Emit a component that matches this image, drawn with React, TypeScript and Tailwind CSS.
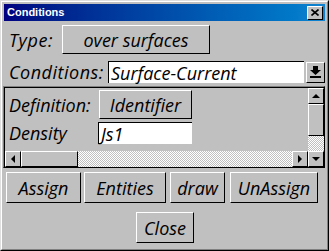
import React from "react";

const raised =
  "border border-t-white border-l-white border-r-black border-b-black bg-[#c0c0c0]";
const font = "font-['Open_Sans',sans-serif] italic text-[18px] text-black leading-none";

function Btn({ w, h, children, cls = "" }: { w: string; h: string; children: React.ReactNode; cls?: string }) {
  return (
    <div className={`${raised} ${w} ${h} ${font} flex items-center justify-center shrink-0 ${cls}`}>
      {children}
    </div>
  );
}

function Arrow({ dir }: { dir: "up" | "down" | "left" | "right" }) {
  const pts =
    dir === "up"
      ? "1,5 5,1 9,5"
      : dir === "down"
      ? "1,1 5,5 9,1"
      : dir === "left"
      ? "5,1 1,5 5,9"
      : "1,1 5,5 1,9";
  const vert = dir === "up" || dir === "down";
  return (
    <div className={`${raised} w-[16px] h-[16px] flex items-center justify-center shrink-0`}>
      <svg width={vert ? 10 : 6} height={vert ? 6 : 10} viewBox={vert ? "0 0 10 6" : "0 0 6 10"}>
        <polygon points={pts} fill="#000" />
      </svg>
    </div>
  );
}

const checker =
  "bg-[repeating-conic-gradient(#c0c0c0_0%_25%,#ffffff_0%_50%)] bg-[length:2px_2px]";

export default function App() {
  return (
    <div className="w-[329px] h-[251px] bg-[#c0c0c0] border border-t-[#dfdfdf] border-l-[#dfdfdf] border-r-black border-b-black">
      <div className="w-full h-full border border-t-white border-l-white border-r-[#808080] border-b-[#808080] p-[2px] flex flex-col">
        {/* title bar */}
        <div className="h-[17px] flex items-center justify-between bg-gradient-to-r from-[#000080] to-[#1084d0] pl-[3px] pr-[2px] shrink-0">
          <span className="font-['Liberation_Sans',sans-serif] font-bold text-[11px] text-white leading-none">
            Conditions
          </span>
          <div className={`${raised} w-[16px] h-[14px] flex items-center justify-center`}>
            <svg width="8" height="7" viewBox="0 0 8 7">
              <path d="M0.5 0.5 L7.5 6.5 M7.5 0.5 L0.5 6.5" stroke="#000" strokeWidth="1.6" />
            </svg>
          </div>
        </div>

        {/* Type row */}
        <div className="mt-[4px] h-[29px] flex items-center shrink-0">
          <span className={`${font} w-[58px] pl-[5px] tracking-[0.6px]`}>Type:</span>
          <Btn w="w-[148px]" h="h-[29px]">over surfaces</Btn>
        </div>

        {/* Conditions row */}
        <div className="mt-[7px] h-[22px] flex items-center shrink-0">
          <span className={`${font} w-[104px] pl-[5px] tracking-[0.5px]`}>Conditions:</span>
          <div className={`w-[196px] h-[22px] bg-white border-t border-l border-t-black border-l-black ${font} flex items-center pl-[2px]`}>
            Surface-Current
          </div>
          <div className={`${raised} ml-[2px] w-[19px] h-[21px] flex items-center justify-center`}>
            <svg width="11" height="12" viewBox="0 0 11 12">
              <polygon points="3,0 8,0 8,4 11,4 5.5,9 0,4 3,4" fill="#000" />
              <rect x="0" y="10" width="11" height="2" fill="#000" />
            </svg>
          </div>
        </div>

        {/* Panel */}
        <div className="mt-[3px] -ml-px w-[322px] h-[82px] border border-t-[#808080] border-l-[#808080] border-b-black border-r-black shadow-[inset_1px_1px_0_#000] pl-px pt-px flex shrink-0">
          <div className="flex flex-col w-[303px]">
            <div className="flex-1 flex flex-col">
              <div className="mt-[2px] h-[29px] flex items-center">
                <span className={`${font} w-[94px] pl-[4px]`}>Definition:</span>
                <Btn w="w-[93px]" h="h-[29px]">Identifier</Btn>
              </div>
              <div className="mt-[3px] h-[22px] flex items-center">
                <span className={`${font} w-[93px] pl-[4px]`}>Density</span>
                <div className={`w-[94px] h-[22px] bg-white border-t border-l border-t-black border-l-black ${font} flex items-center pl-[2px]`}>
                  Js1
                </div>
              </div>
            </div>
            <div className="h-[16px] flex">
              <Arrow dir="left" />
              <div className={`${raised} w-[57px] h-[16px] shrink-0`} />
              <div className={`flex-1 ${checker}`} />
              <Arrow dir="right" />
            </div>
          </div>
          <div className="flex flex-col w-[16px]">
            <Arrow dir="up" />
            <div className={`${raised} w-[16px] h-[32px] shrink-0`} />
            <div className={`flex-1 ${checker}`} />
            <Arrow dir="down" />
          </div>
        </div>

        {/* Buttons row */}
        <div className="mt-[4px] flex pl-[2px] shrink-0">
          <Btn w="w-[75px]" h="h-[31px]">Assign</Btn>
          <Btn w="w-[82px]" h="h-[31px]" cls="ml-[3px]">Entities</Btn>
          <Btn w="w-[55px]" h="h-[31px]" cls="ml-[4px]">draw</Btn>
          <Btn w="w-[88px]" h="h-[31px]" cls="ml-[5px]">UnAssign</Btn>
        </div>

        <div className="mt-[9px] flex justify-center shrink-0">
          <div className="ml-[1px]">
            <Btn w="w-[58px]" h="h-[31px]">Close</Btn>
          </div>
        </div>
      </div>
    </div>
  );
}
